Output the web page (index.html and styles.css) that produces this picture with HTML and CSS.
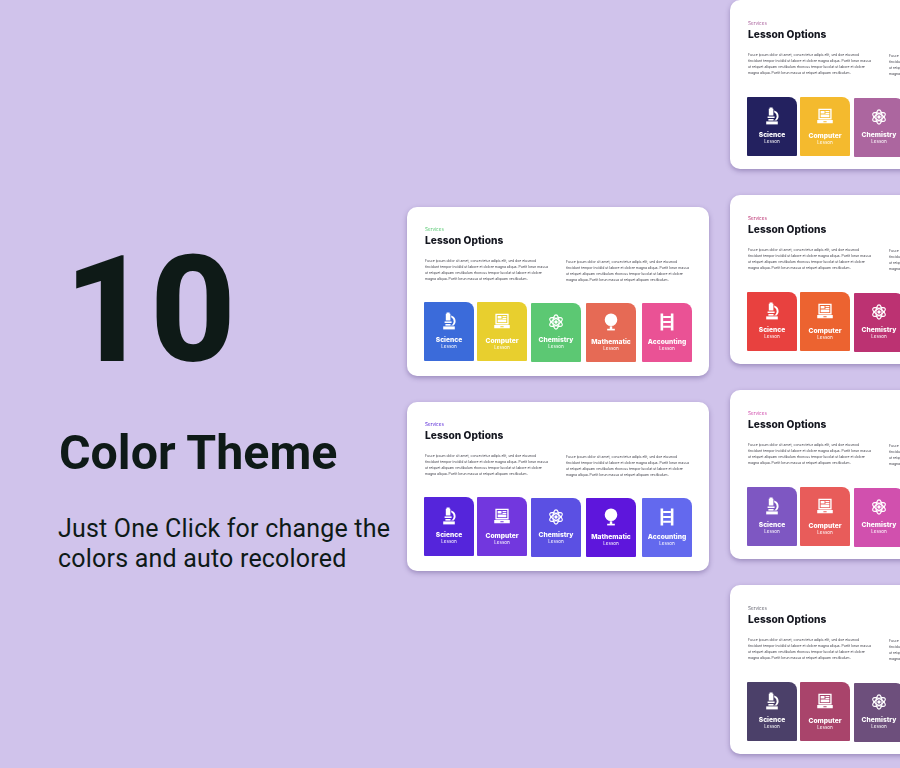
FILE: index.html
```html
<!DOCTYPE html>
<html lang="en">
<head>
<meta charset="utf-8">
<title>10 Color Theme</title>
<link rel="stylesheet" href="styles.css">
</head>
<body>
<svg class="sprite" xmlns="http://www.w3.org/2000/svg">
  <symbol id="i-scope" viewBox="0 0 16 18">
    <path d="M5.6 0.6h3v1.2h0.8v6.6H4.8V1.8h0.8z"/>
    <path d="M10.2 3.4a6 6 0 0 1 2.4 10.2h-2.6a4.6 4.6 0 0 0 0.2-8.3z"/>
    <path d="M3.6 9.4h7v1.6h-7z"/>
    <path d="M4.4 12h5.2v1.6H4.4z"/>
    <path d="M2.2 14.4h11.6v3H2.2z"/>
  </symbol>
  <symbol id="i-laptop" viewBox="0 0 14 14">
    <path fill-rule="evenodd" d="M1.2 0.6h11.6v9.4H1.2zM2.4 1.8v7h9.2v-7z"/>
    <path d="M3.2 2.6h3.4v2.2H3.2zM7.4 2.6h3.4v1H7.4zM7.4 4.2h3.4v1H7.4zM3.2 5.6h7.6v2.4H3.2z"/>
    <path fill-rule="evenodd" d="M0.2 10.6h13.6v2.8H0.2zM5.6 11.6v0.8h2.8v-0.8z"/>
  </symbol>
  <symbol id="i-atom" viewBox="0 0 14 14">
    <g class="atom-rings">
      <ellipse cx="7" cy="7" rx="2.7" ry="6.2"/>
      <ellipse cx="7" cy="7" rx="2.7" ry="6.2" transform="rotate(60 7 7)"/>
      <ellipse cx="7" cy="7" rx="2.7" ry="6.2" transform="rotate(120 7 7)"/>
    </g>
    <circle cx="7" cy="7" r="1.5"/>
  </symbol>
  <symbol id="i-globe" viewBox="0 0 14 16">
    <path d="M7 0.4a5.6 5.6 0 1 1 0 11.2a5.6 5.6 0 1 1 0-11.2z"/>
    <path d="M5.9 11.8h2.2v2.4H5.9z"/>
    <path d="M3.6 14h6.8v1.5H3.6z"/>
  </symbol>
  <symbol id="i-ladder" viewBox="0 0 12 14">
    <path fill-rule="evenodd" d="M1 0.4h2v13.2H1zM9 0.4h2v13.2H9z"/>
    <path d="M3 2.4h6v1.5H3zM3 6.2h6v1.5H3zM3 10h6v1.5H3z"/>
  </symbol>
</svg>

<main class="stage">
  <section class="intro">
    <h1 class="intro-number">10</h1>
    <h2 class="intro-title">Color Theme</h2>
    <p class="intro-text">Just One Click for change the<br>colors and auto recolored</p>
  </section>

  <div class="slides slides--middle">
    <article class="slide theme-green">
      <p class="eyebrow">Services</p>
      <h3 class="slide-title">Lesson Options</h3>
      <div class="copy">
        <p>Fusce ipsum dolor sit amet, consectetur adipis elit, sed doe eiusmod tincidunt tempor incidid ut labore et dolore magna aliqua. Purtit lorun massa ut reiquet aliquam vestibulum rhoncus tempor lucolat ut labore et dolore magna aliqua. Purtit lorun massa ut reiquet aliquam vestibulum.</p>
        <p>Fusce ipsum dolor sit amet, consectetur adipis elit, sed doe eiusmod tincidunt tempor incidid ut labore et dolore magna aliqua. Purtit lorun massa ut reiquet aliquam vestibulum rhoncus tempor lucolat ut labore et dolore magna aliqua. Purtit lorun massa ut reiquet aliquam vestibulum.</p>
      </div>
      <div class="tiles">
        <div class="tile tile-1"><svg class="icon"><use href="#i-scope"/></svg><b class="tile-name">Science</b><span class="tile-sub">Lesson</span></div>
        <div class="tile tile-2"><svg class="icon"><use href="#i-laptop"/></svg><b class="tile-name">Computer</b><span class="tile-sub">Lesson</span></div>
        <div class="tile tile-3"><svg class="icon"><use href="#i-atom"/></svg><b class="tile-name">Chemistry</b><span class="tile-sub">Lesson</span></div>
        <div class="tile tile-4"><svg class="icon"><use href="#i-globe"/></svg><b class="tile-name">Mathematic</b><span class="tile-sub">Lesson</span></div>
        <div class="tile tile-5"><svg class="icon"><use href="#i-ladder"/></svg><b class="tile-name">Accounting</b><span class="tile-sub">Lesson</span></div>
      </div>
    </article>

    <article class="slide theme-violet">
      <p class="eyebrow">Services</p>
      <h3 class="slide-title">Lesson Options</h3>
      <div class="copy">
        <p>Fusce ipsum dolor sit amet, consectetur adipis elit, sed doe eiusmod tincidunt tempor incidid ut labore et dolore magna aliqua. Purtit lorun massa ut reiquet aliquam vestibulum rhoncus tempor lucolat ut labore et dolore magna aliqua. Purtit lorun massa ut reiquet aliquam vestibulum.</p>
        <p>Fusce ipsum dolor sit amet, consectetur adipis elit, sed doe eiusmod tincidunt tempor incidid ut labore et dolore magna aliqua. Purtit lorun massa ut reiquet aliquam vestibulum rhoncus tempor lucolat ut labore et dolore magna aliqua. Purtit lorun massa ut reiquet aliquam vestibulum.</p>
      </div>
      <div class="tiles">
        <div class="tile tile-1"><svg class="icon"><use href="#i-scope"/></svg><b class="tile-name">Science</b><span class="tile-sub">Lesson</span></div>
        <div class="tile tile-2"><svg class="icon"><use href="#i-laptop"/></svg><b class="tile-name">Computer</b><span class="tile-sub">Lesson</span></div>
        <div class="tile tile-3"><svg class="icon"><use href="#i-atom"/></svg><b class="tile-name">Chemistry</b><span class="tile-sub">Lesson</span></div>
        <div class="tile tile-4"><svg class="icon"><use href="#i-globe"/></svg><b class="tile-name">Mathematic</b><span class="tile-sub">Lesson</span></div>
        <div class="tile tile-5"><svg class="icon"><use href="#i-ladder"/></svg><b class="tile-name">Accounting</b><span class="tile-sub">Lesson</span></div>
      </div>
    </article>
  </div>

  <div class="slides slides--right">
    <article class="slide theme-navy">
      <p class="eyebrow">Services</p>
      <h3 class="slide-title">Lesson Options</h3>
      <div class="copy">
        <p>Fusce ipsum dolor sit amet, consectetur adipis elit, sed doe eiusmod tincidunt tempor incidid ut labore et dolore magna aliqua. Purtit lorun massa ut reiquet aliquam vestibulum rhoncus tempor lucolat ut labore et dolore magna aliqua. Purtit lorun massa ut reiquet aliquam vestibulum.</p>
        <p>Fusce ipsum dolor sit amet, consectetur adipis elit, sed doe eiusmod tincidunt tempor incidid ut labore et dolore magna aliqua. Purtit lorun massa ut reiquet aliquam vestibulum rhoncus tempor lucolat ut labore et dolore magna aliqua. Purtit lorun massa ut reiquet aliquam vestibulum.</p>
      </div>
      <div class="tiles">
        <div class="tile tile-1"><svg class="icon"><use href="#i-scope"/></svg><b class="tile-name">Science</b><span class="tile-sub">Lesson</span></div>
        <div class="tile tile-2"><svg class="icon"><use href="#i-laptop"/></svg><b class="tile-name">Computer</b><span class="tile-sub">Lesson</span></div>
        <div class="tile tile-3"><svg class="icon"><use href="#i-atom"/></svg><b class="tile-name">Chemistry</b><span class="tile-sub">Lesson</span></div>
      </div>
    </article>

    <article class="slide theme-red">
      <p class="eyebrow">Services</p>
      <h3 class="slide-title">Lesson Options</h3>
      <div class="copy">
        <p>Fusce ipsum dolor sit amet, consectetur adipis elit, sed doe eiusmod tincidunt tempor incidid ut labore et dolore magna aliqua. Purtit lorun massa ut reiquet aliquam vestibulum rhoncus tempor lucolat ut labore et dolore magna aliqua. Purtit lorun massa ut reiquet aliquam vestibulum.</p>
        <p>Fusce ipsum dolor sit amet, consectetur adipis elit, sed doe eiusmod tincidunt tempor incidid ut labore et dolore magna aliqua. Purtit lorun massa ut reiquet aliquam vestibulum rhoncus tempor lucolat ut labore et dolore magna aliqua. Purtit lorun massa ut reiquet aliquam vestibulum.</p>
      </div>
      <div class="tiles">
        <div class="tile tile-1"><svg class="icon"><use href="#i-scope"/></svg><b class="tile-name">Science</b><span class="tile-sub">Lesson</span></div>
        <div class="tile tile-2"><svg class="icon"><use href="#i-laptop"/></svg><b class="tile-name">Computer</b><span class="tile-sub">Lesson</span></div>
        <div class="tile tile-3"><svg class="icon"><use href="#i-atom"/></svg><b class="tile-name">Chemistry</b><span class="tile-sub">Lesson</span></div>
      </div>
    </article>

    <article class="slide theme-orchid">
      <p class="eyebrow">Services</p>
      <h3 class="slide-title">Lesson Options</h3>
      <div class="copy">
        <p>Fusce ipsum dolor sit amet, consectetur adipis elit, sed doe eiusmod tincidunt tempor incidid ut labore et dolore magna aliqua. Purtit lorun massa ut reiquet aliquam vestibulum rhoncus tempor lucolat ut labore et dolore magna aliqua. Purtit lorun massa ut reiquet aliquam vestibulum.</p>
        <p>Fusce ipsum dolor sit amet, consectetur adipis elit, sed doe eiusmod tincidunt tempor incidid ut labore et dolore magna aliqua. Purtit lorun massa ut reiquet aliquam vestibulum rhoncus tempor lucolat ut labore et dolore magna aliqua. Purtit lorun massa ut reiquet aliquam vestibulum.</p>
      </div>
      <div class="tiles">
        <div class="tile tile-1"><svg class="icon"><use href="#i-scope"/></svg><b class="tile-name">Science</b><span class="tile-sub">Lesson</span></div>
        <div class="tile tile-2"><svg class="icon"><use href="#i-laptop"/></svg><b class="tile-name">Computer</b><span class="tile-sub">Lesson</span></div>
        <div class="tile tile-3"><svg class="icon"><use href="#i-atom"/></svg><b class="tile-name">Chemistry</b><span class="tile-sub">Lesson</span></div>
      </div>
    </article>

    <article class="slide theme-dusk">
      <p class="eyebrow">Services</p>
      <h3 class="slide-title">Lesson Options</h3>
      <div class="copy">
        <p>Fusce ipsum dolor sit amet, consectetur adipis elit, sed doe eiusmod tincidunt tempor incidid ut labore et dolore magna aliqua. Purtit lorun massa ut reiquet aliquam vestibulum rhoncus tempor lucolat ut labore et dolore magna aliqua. Purtit lorun massa ut reiquet aliquam vestibulum.</p>
        <p>Fusce ipsum dolor sit amet, consectetur adipis elit, sed doe eiusmod tincidunt tempor incidid ut labore et dolore magna aliqua. Purtit lorun massa ut reiquet aliquam vestibulum rhoncus tempor lucolat ut labore et dolore magna aliqua. Purtit lorun massa ut reiquet aliquam vestibulum.</p>
      </div>
      <div class="tiles">
        <div class="tile tile-1"><svg class="icon"><use href="#i-scope"/></svg><b class="tile-name">Science</b><span class="tile-sub">Lesson</span></div>
        <div class="tile tile-2"><svg class="icon"><use href="#i-laptop"/></svg><b class="tile-name">Computer</b><span class="tile-sub">Lesson</span></div>
        <div class="tile tile-3"><svg class="icon"><use href="#i-atom"/></svg><b class="tile-name">Chemistry</b><span class="tile-sub">Lesson</span></div>
      </div>
    </article>
  </div>
</main>
</body>
</html>
```

FILE: styles.css
```css
* { box-sizing: border-box; }

html, body {
  margin: 0;
  height: 100%;
  overflow: hidden;
  background: #d0c3eb;
}

.sprite { display: none; }

.atom-rings { fill: none; stroke: #fff; stroke-width: 1; }

.stage {
  display: flex;
  width: 900px;
  height: 768px;
  overflow: hidden;
}

/* Left intro column */
.intro {
  flex: 0 0 407px;
  padding: 225px 0 0 58px;
  font-family: Roboto, "Liberation Sans", sans-serif;
  color: #0e1a17;
}

.intro-number {
  margin: 0 0 0 6px;
  font-size: 149px;
  line-height: 170px;
  font-weight: 800;
}

.intro-title {
  margin: 31px 0 0 1px;
  font-size: 48.3px;
  line-height: 54px;
  font-weight: 700;
}

.intro-text {
  margin: 34px 0 0;
  font-size: 25px;
  line-height: 29.5px;
  font-weight: 400;
  letter-spacing: .2px;
  white-space: nowrap;
}

/* Slide columns */
.slides {
  display: flex;
  flex-direction: column;
  gap: 26px;
  flex: 0 0 auto;
}

.slides--middle { width: 323px; padding-top: 207px; }
.slides--right { width: 302px; }

.slide {
  width: 302px;
  height: 169px;
  flex: 0 0 auto;
  padding: 20px 0 0 18px;
  background: #fff;
  border-radius: 10px;
  box-shadow: 0 2px 5px rgba(74, 56, 120, .4);
  font-family: Inter, "Liberation Sans", sans-serif;
  color: #14161f;
  filter: blur(.25px);
}

.slides--right .slide { padding-top: 21px; }

.eyebrow {
  margin: 0;
  font-size: 4.6px;
  line-height: 5px;
  color: var(--accent);
}

.slide-title {
  margin: 2px 0 0;
  font-size: 10.2px;
  line-height: 13px;
  font-weight: 800;
}

.copy {
  display: flex;
  gap: 17px;
  margin-top: 11px;
}

.copy p {
  flex: 0 0 124px;
  margin: 0;
  font-size: 3.45px;
  line-height: 6px;
  color: #3c3c46;
}

.copy p + p { margin-top: 1px; }

.tiles {
  position: relative;
  display: flex;
  align-items: flex-start;
  margin: 19px 0 0 -1px;
}

.slides--right .tiles { margin-top: 20px; }

.tile {
  display: flex;
  flex-direction: column;
  align-items: center;
  flex: 0 0 50px;
  height: 59px;
  padding-top: 10px;
  border-radius: 1px 8px 1px 1px;
  color: #fff;
  font-family: Inter, "Liberation Sans", sans-serif;
}

.tile-1 { background: var(--t1); }
.tile-2 { background: var(--t2); margin-left: 3px; }
.tile-3 { background: var(--t3); margin: 1px 0 0 4px; }
.tile-4 { background: var(--t4); margin: 1px 0 0 5px; }
.tile-5 { background: var(--t5); margin: 1px 0 0 6px; }

.icon {
  width: 16px;
  height: 18px;
  fill: #fff;
}

.tile-name {
  margin-top: 6px;
  font-size: 6.7px;
  line-height: 8px;
  font-weight: 800;
  white-space: nowrap;
}

.tile-2 .tile-name { margin-top: 7px; }
.tile-3 .tile-name { margin-top: 5px; }
.tile-4 .tile-name,
.tile-5 .tile-name { margin-top: 7px; }

.tile-sub {
  margin-top: 0;
  font-size: 4.6px;
  line-height: 6px;
}

/* Colour themes */
.theme-green  { --accent: #5ecb78; --t1: #3b6bda; --t2: #e8cf2e; --t3: #5cc873; --t4: #e66a55; --t5: #ea5295; }
.theme-violet { --accent: #5b2bd8; --t1: #5525db; --t2: #7237de; --t3: #5b50e3; --t4: #5e16dc; --t5: #6369ee; }
.theme-navy   { --accent: #ac669f; --t1: #23215f; --t2: #f4ba2e; --t3: #ac669f; }
.theme-red    { --accent: #bc3272; --t1: #e8413f; --t2: #ec6330; --t3: #bc3272; }
.theme-orchid { --accent: #d150ae; --t1: #7e57c2; --t2: #e85c5a; --t3: #d150ae; }
.theme-dusk   { --accent: #6d6d78; --t1: #4b4069; --t2: #a9446b; --t3: #6d4f7c; }
```
